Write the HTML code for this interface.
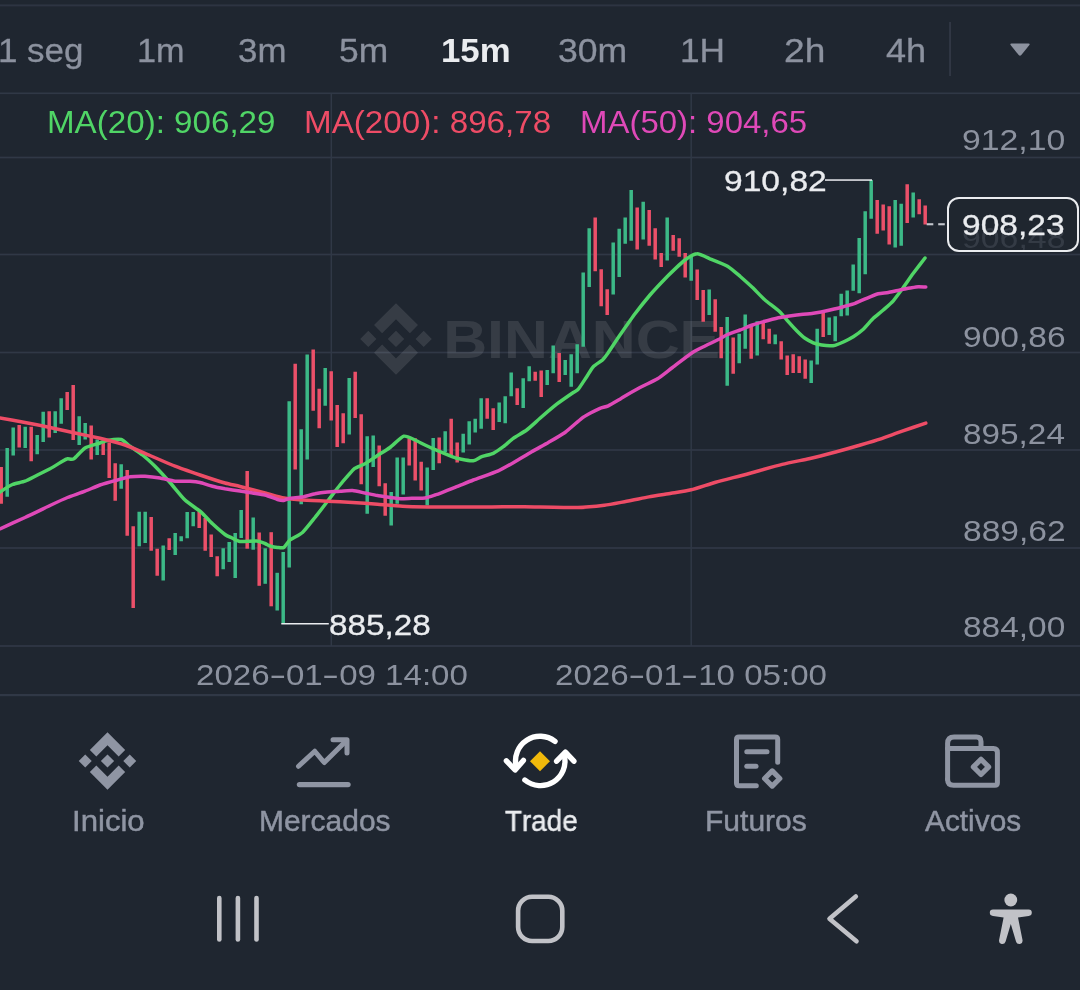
<!DOCTYPE html>
<html lang="es"><head><meta charset="utf-8"><title>Binance chart</title>
<style>
html,body{margin:0;padding:0;background:#1f2630;}
body{width:1080px;height:990px;position:relative;overflow:hidden;font-family:"Liberation Sans",sans-serif;}
.abs{position:absolute;}
.grp{position:absolute;left:0;top:0;width:0;height:0;}
.t{position:absolute;white-space:nowrap;line-height:1;font-kerning:none;transform-origin:0 0;will-change:transform;}
</style></head><body>
<svg class="abs" style="left:0;top:0" width="1080" height="990" viewBox="0 0 1080 990">
<rect x="0" y="4.4" width="1080" height="2" fill="#2d3442"/>
<rect x="0" y="92.5" width="1080" height="1.6" fill="#303846"/>
<rect x="949.3" y="22" width="1.5" height="54" fill="#363c4a"/>
<path d="M1011.5 43.5 H1028.5 Q1030.5 43.5 1029.2 45.3 L1021.3 55 Q1020 56.5 1018.7 55 L1010.8 45.3 Q1009.5 43.5 1011.5 43.5Z" fill="#8c929f"/>
<rect x="0" y="156.65" width="1080" height="1.7" fill="#303846"/>
<rect x="0" y="253.65" width="1080" height="1.7" fill="#303846"/>
<rect x="0" y="351.65" width="1080" height="1.7" fill="#303846"/>
<rect x="0" y="449.15" width="1080" height="1.7" fill="#303846"/>
<rect x="0" y="547.15" width="1080" height="1.7" fill="#303846"/>
<rect x="0" y="645.15" width="1080" height="1.7" fill="#303846"/>
<rect x="0" y="694" width="1080" height="2.2" fill="#303846"/>
<rect x="330.55" y="93" width="1.5" height="553" fill="#303846"/>
<rect x="690.45" y="93" width="1.5" height="553" fill="#303846"/>
<path transform="translate(360.25 303.15) scale(0.56473)" d="M38.73 53.2 63.3 28.63l24.58 24.58 14.3-14.3L63.3 0 24.43 38.9l14.3 14.3z M0 63.31l14.3-14.3 14.3 14.3-14.3 14.3z M38.73 73.41 63.3 97.98l24.58-24.58 14.31 14.29-38.89 38.91-38.88-38.88-.02-.02 14.33-14.29z M98 63.31l14.3-14.3 14.31 14.3-14.31 14.3z M77.83 63.3 63.3 48.78 52.57 59.51l-1.24 1.23-2.54 2.54-.02.02.02.03 14.51 14.5 14.53-14.52.01-.01-.01-.01z" fill="#ffffff" fill-opacity="0.105"/>
<text x="443.2" y="358" font-family="Liberation Sans, sans-serif" font-weight="700" font-size="54" fill="#ffffff" fill-opacity="0.105" textLength="277" lengthAdjust="spacingAndGlyphs">BINANCE</text>
<rect x="-0.55" y="467.00" width="3.5" height="36.75" fill="#eb5069"/>
<rect x="5.45" y="448.00" width="3.5" height="48.75" fill="#3cb987"/>
<rect x="11.45" y="427.50" width="3.5" height="28.00" fill="#3cb987"/>
<rect x="17.45" y="425.00" width="3.5" height="22.50" fill="#eb5069"/>
<rect x="23.45" y="426.75" width="3.5" height="21.25" fill="#3cb987"/>
<rect x="29.45" y="426.75" width="3.5" height="34.50" fill="#eb5069"/>
<rect x="35.45" y="435.00" width="3.5" height="19.25" fill="#3cb987"/>
<rect x="41.45" y="411.75" width="3.5" height="30.25" fill="#3cb987"/>
<rect x="47.45" y="411.25" width="3.5" height="26.25" fill="#eb5069"/>
<rect x="53.45" y="411.25" width="3.5" height="21.75" fill="#3cb987"/>
<rect x="59.45" y="398.25" width="3.5" height="25.50" fill="#3cb987"/>
<rect x="65.45" y="392.00" width="3.5" height="18.00" fill="#eb5069"/>
<rect x="71.45" y="385.00" width="3.5" height="55.00" fill="#eb5069"/>
<rect x="77.45" y="416.25" width="3.5" height="28.75" fill="#3cb987"/>
<rect x="83.45" y="423.00" width="3.5" height="16.50" fill="#3cb987"/>
<rect x="89.45" y="425.50" width="3.5" height="34.00" fill="#eb5069"/>
<rect x="95.45" y="439.50" width="3.5" height="15.50" fill="#3cb987"/>
<rect x="101.45" y="440.50" width="3.5" height="14.50" fill="#eb5069"/>
<rect x="107.45" y="442.50" width="3.5" height="35.50" fill="#eb5069"/>
<rect x="113.45" y="463.25" width="3.5" height="37.50" fill="#eb5069"/>
<rect x="119.45" y="464.25" width="3.5" height="24.50" fill="#3cb987"/>
<rect x="125.45" y="470.00" width="3.5" height="65.75" fill="#eb5069"/>
<rect x="131.45" y="526.25" width="3.5" height="81.75" fill="#eb5069"/>
<rect x="137.45" y="511.75" width="3.5" height="34.50" fill="#3cb987"/>
<rect x="143.45" y="511.75" width="3.5" height="31.25" fill="#3cb987"/>
<rect x="149.45" y="517.00" width="3.5" height="33.75" fill="#eb5069"/>
<rect x="155.45" y="548.75" width="3.5" height="27.00" fill="#eb5069"/>
<rect x="161.45" y="545.50" width="3.5" height="35.00" fill="#3cb987"/>
<rect x="167.45" y="538.25" width="3.5" height="11.75" fill="#eb5069"/>
<rect x="173.45" y="533.00" width="3.5" height="22.00" fill="#3cb987"/>
<rect x="179.45" y="536.25" width="3.5" height="5.00" fill="#3cb987"/>
<rect x="185.45" y="512.00" width="3.5" height="26.25" fill="#3cb987"/>
<rect x="191.45" y="512.00" width="3.5" height="14.25" fill="#3cb987"/>
<rect x="197.45" y="511.25" width="3.5" height="16.75" fill="#eb5069"/>
<rect x="203.45" y="518.00" width="3.5" height="32.75" fill="#eb5069"/>
<rect x="209.45" y="534.50" width="3.5" height="22.50" fill="#eb5069"/>
<rect x="215.45" y="556.25" width="3.5" height="20.00" fill="#eb5069"/>
<rect x="221.45" y="548.25" width="3.5" height="21.00" fill="#3cb987"/>
<rect x="227.45" y="542.00" width="3.5" height="20.00" fill="#3cb987"/>
<rect x="233.45" y="533.00" width="3.5" height="45.00" fill="#3cb987"/>
<rect x="239.45" y="510.00" width="3.5" height="28.00" fill="#3cb987"/>
<rect x="245.45" y="471.00" width="3.5" height="77.70" fill="#eb5069"/>
<rect x="251.45" y="517.50" width="3.5" height="32.20" fill="#3cb987"/>
<rect x="257.45" y="532.50" width="3.5" height="53.30" fill="#eb5069"/>
<rect x="263.45" y="548.30" width="3.5" height="35.50" fill="#3cb987"/>
<rect x="269.45" y="532.20" width="3.5" height="74.10" fill="#eb5069"/>
<rect x="275.45" y="572.80" width="3.5" height="37.70" fill="#3cb987"/>
<rect x="281.45" y="552.00" width="3.5" height="71.70" fill="#3cb987"/>
<rect x="287.45" y="401.25" width="3.5" height="166.25" fill="#3cb987"/>
<rect x="293.45" y="363.75" width="3.5" height="105.75" fill="#eb5069"/>
<rect x="299.45" y="429.25" width="3.5" height="75.00" fill="#3cb987"/>
<rect x="305.45" y="354.50" width="3.5" height="105.00" fill="#3cb987"/>
<rect x="311.45" y="349.50" width="3.5" height="61.25" fill="#eb5069"/>
<rect x="317.45" y="388.75" width="3.5" height="39.50" fill="#eb5069"/>
<rect x="323.45" y="368.00" width="3.5" height="37.75" fill="#3cb987"/>
<rect x="329.45" y="371.25" width="3.5" height="49.25" fill="#eb5069"/>
<rect x="335.45" y="405.00" width="3.5" height="42.00" fill="#eb5069"/>
<rect x="341.45" y="413.25" width="3.5" height="30.00" fill="#eb5069"/>
<rect x="347.45" y="378.00" width="3.5" height="56.50" fill="#3cb987"/>
<rect x="353.45" y="371.75" width="3.5" height="46.25" fill="#eb5069"/>
<rect x="359.45" y="414.25" width="3.5" height="70.00" fill="#eb5069"/>
<rect x="365.45" y="436.25" width="3.5" height="77.50" fill="#3cb987"/>
<rect x="371.45" y="435.50" width="3.5" height="31.50" fill="#3cb987"/>
<rect x="377.45" y="445.50" width="3.5" height="40.75" fill="#eb5069"/>
<rect x="383.45" y="483.25" width="3.5" height="32.50" fill="#eb5069"/>
<rect x="389.45" y="492.00" width="3.5" height="33.50" fill="#3cb987"/>
<rect x="395.45" y="457.50" width="3.5" height="46.25" fill="#3cb987"/>
<rect x="401.45" y="457.50" width="3.5" height="37.00" fill="#3cb987"/>
<rect x="407.45" y="438.25" width="3.5" height="27.25" fill="#eb5069"/>
<rect x="413.45" y="438.25" width="3.5" height="42.25" fill="#eb5069"/>
<rect x="419.45" y="461.75" width="3.5" height="28.75" fill="#eb5069"/>
<rect x="425.45" y="467.50" width="3.5" height="38.00" fill="#3cb987"/>
<rect x="431.45" y="438.00" width="3.5" height="32.00" fill="#3cb987"/>
<rect x="437.45" y="437.50" width="3.5" height="25.75" fill="#eb5069"/>
<rect x="443.45" y="431.25" width="3.5" height="20.75" fill="#3cb987"/>
<rect x="449.45" y="418.75" width="3.5" height="36.25" fill="#eb5069"/>
<rect x="455.45" y="442.50" width="3.5" height="20.00" fill="#eb5069"/>
<rect x="461.45" y="433.75" width="3.5" height="18.75" fill="#3cb987"/>
<rect x="467.45" y="421.25" width="3.5" height="23.25" fill="#3cb987"/>
<rect x="473.45" y="418.75" width="3.5" height="13.75" fill="#3cb987"/>
<rect x="479.45" y="398.25" width="3.5" height="30.50" fill="#3cb987"/>
<rect x="485.45" y="398.25" width="3.5" height="20.50" fill="#eb5069"/>
<rect x="491.45" y="408.25" width="3.5" height="21.75" fill="#eb5069"/>
<rect x="497.45" y="402.50" width="3.5" height="19.50" fill="#3cb987"/>
<rect x="503.45" y="396.25" width="3.5" height="27.00" fill="#3cb987"/>
<rect x="509.45" y="372.50" width="3.5" height="23.75" fill="#3cb987"/>
<rect x="515.45" y="388.25" width="3.5" height="16.75" fill="#eb5069"/>
<rect x="521.45" y="378.25" width="3.5" height="29.75" fill="#3cb987"/>
<rect x="527.45" y="366.25" width="3.5" height="15.00" fill="#3cb987"/>
<rect x="533.45" y="371.75" width="3.5" height="9.00" fill="#eb5069"/>
<rect x="539.45" y="370.50" width="3.5" height="26.50" fill="#eb5069"/>
<rect x="545.45" y="370.00" width="3.5" height="15.00" fill="#3cb987"/>
<rect x="551.45" y="345.50" width="3.5" height="27.75" fill="#3cb987"/>
<rect x="557.45" y="353.00" width="3.5" height="29.00" fill="#eb5069"/>
<rect x="563.45" y="360.00" width="3.5" height="15.00" fill="#3cb987"/>
<rect x="569.45" y="354.25" width="3.5" height="32.50" fill="#3cb987"/>
<rect x="575.45" y="344.25" width="3.5" height="29.00" fill="#3cb987"/>
<rect x="581.45" y="272.50" width="3.5" height="74.25" fill="#3cb987"/>
<rect x="587.45" y="228.25" width="3.5" height="58.75" fill="#3cb987"/>
<rect x="593.45" y="217.50" width="3.5" height="53.75" fill="#eb5069"/>
<rect x="599.45" y="269.25" width="3.5" height="37.00" fill="#eb5069"/>
<rect x="605.45" y="289.25" width="3.5" height="25.75" fill="#eb5069"/>
<rect x="611.45" y="242.50" width="3.5" height="52.00" fill="#3cb987"/>
<rect x="617.45" y="228.75" width="3.5" height="48.25" fill="#3cb987"/>
<rect x="623.45" y="217.50" width="3.5" height="26.25" fill="#3cb987"/>
<rect x="629.45" y="190.00" width="3.5" height="50.75" fill="#3cb987"/>
<rect x="635.45" y="207.50" width="3.5" height="42.00" fill="#eb5069"/>
<rect x="641.45" y="201.75" width="3.5" height="37.75" fill="#3cb987"/>
<rect x="647.45" y="210.00" width="3.5" height="35.75" fill="#eb5069"/>
<rect x="653.45" y="228.25" width="3.5" height="31.25" fill="#eb5069"/>
<rect x="659.45" y="253.00" width="3.5" height="14.00" fill="#eb5069"/>
<rect x="665.45" y="217.50" width="3.5" height="43.00" fill="#3cb987"/>
<rect x="671.45" y="235.00" width="3.5" height="15.75" fill="#eb5069"/>
<rect x="677.45" y="238.25" width="3.5" height="18.50" fill="#eb5069"/>
<rect x="683.45" y="253.00" width="3.5" height="24.50" fill="#eb5069"/>
<rect x="689.45" y="256.25" width="3.5" height="24.50" fill="#3cb987"/>
<rect x="695.45" y="269.50" width="3.5" height="30.50" fill="#eb5069"/>
<rect x="701.45" y="290.00" width="3.5" height="31.75" fill="#eb5069"/>
<rect x="707.45" y="289.50" width="3.5" height="25.50" fill="#3cb987"/>
<rect x="713.45" y="299.25" width="3.5" height="32.50" fill="#eb5069"/>
<rect x="719.45" y="327.00" width="3.5" height="31.25" fill="#eb5069"/>
<rect x="725.45" y="317.00" width="3.5" height="68.75" fill="#3cb987"/>
<rect x="731.45" y="337.50" width="3.5" height="36.25" fill="#eb5069"/>
<rect x="737.45" y="333.75" width="3.5" height="29.50" fill="#3cb987"/>
<rect x="743.45" y="314.50" width="3.5" height="34.25" fill="#3cb987"/>
<rect x="749.45" y="326.25" width="3.5" height="32.50" fill="#eb5069"/>
<rect x="755.45" y="321.25" width="3.5" height="34.25" fill="#3cb987"/>
<rect x="761.45" y="323.00" width="3.5" height="16.25" fill="#eb5069"/>
<rect x="767.45" y="328.75" width="3.5" height="15.00" fill="#eb5069"/>
<rect x="773.45" y="334.50" width="3.5" height="9.75" fill="#3cb987"/>
<rect x="779.45" y="341.25" width="3.5" height="18.25" fill="#eb5069"/>
<rect x="785.45" y="355.50" width="3.5" height="19.50" fill="#eb5069"/>
<rect x="791.45" y="354.25" width="3.5" height="18.75" fill="#eb5069"/>
<rect x="797.45" y="356.25" width="3.5" height="16.75" fill="#eb5069"/>
<rect x="803.45" y="359.50" width="3.5" height="19.25" fill="#eb5069"/>
<rect x="809.45" y="360.50" width="3.5" height="22.50" fill="#3cb987"/>
<rect x="815.45" y="328.75" width="3.5" height="35.75" fill="#3cb987"/>
<rect x="821.45" y="312.50" width="3.5" height="24.50" fill="#eb5069"/>
<rect x="827.45" y="317.50" width="3.5" height="17.50" fill="#3cb987"/>
<rect x="833.45" y="316.25" width="3.5" height="25.00" fill="#3cb987"/>
<rect x="839.45" y="293.75" width="3.5" height="22.50" fill="#3cb987"/>
<rect x="845.45" y="290.50" width="3.5" height="25.00" fill="#3cb987"/>
<rect x="851.45" y="264.50" width="3.5" height="26.25" fill="#3cb987"/>
<rect x="857.45" y="238.00" width="3.5" height="55.25" fill="#3cb987"/>
<rect x="863.45" y="211.25" width="3.5" height="63.00" fill="#3cb987"/>
<rect x="869.45" y="180.00" width="3.5" height="38.75" fill="#3cb987"/>
<rect x="875.45" y="200.00" width="3.5" height="33.75" fill="#eb5069"/>
<rect x="881.45" y="204.50" width="3.5" height="26.00" fill="#eb5069"/>
<rect x="887.45" y="206.25" width="3.5" height="38.25" fill="#eb5069"/>
<rect x="893.45" y="200.00" width="3.5" height="47.50" fill="#3cb987"/>
<rect x="899.45" y="203.75" width="3.5" height="42.00" fill="#3cb987"/>
<rect x="905.45" y="184.25" width="3.5" height="38.75" fill="#eb5069"/>
<rect x="911.45" y="192.50" width="3.5" height="25.00" fill="#3cb987"/>
<rect x="917.45" y="199.25" width="3.5" height="15.00" fill="#eb5069"/>
<rect x="923.45" y="205.50" width="3.5" height="19.00" fill="#eb5069"/>
<path d="M0.0 492.0 C1.2 491.2 10.0 485.6 12.5 484.5 C15.0 483.4 22.5 482.2 25.0 481.2 C27.5 480.3 35.0 476.2 37.5 475.0 C40.0 473.8 47.5 470.1 50.0 468.8 C52.5 467.4 60.8 462.2 62.5 461.2 C64.2 460.2 66.4 459.0 67.5 458.8 C68.6 458.5 72.0 459.8 73.8 458.8 C75.5 457.7 82.4 449.6 85.0 448.0 C87.6 446.4 97.8 443.8 100.0 443.0 C102.2 442.2 105.4 440.9 107.5 440.5 C109.6 440.1 119.0 438.9 121.2 439.5 C123.5 440.1 127.9 444.7 130.0 446.2 C132.1 447.8 140.0 453.0 142.5 455.0 C145.0 457.0 152.2 463.5 155.0 466.2 C157.8 469.0 167.0 479.1 170.0 482.5 C173.0 485.9 182.0 497.1 185.0 500.0 C188.0 502.9 197.2 508.9 200.0 511.2 C202.8 513.6 210.0 521.4 212.5 523.8 C215.0 526.1 223.1 533.1 225.0 534.5 C226.9 535.9 230.5 537.3 232.0 538.0 C233.5 538.7 237.5 541.2 240.0 541.5 C242.5 541.8 254.2 540.8 256.7 541.0 C259.2 541.2 263.7 543.0 265.0 543.5 C266.3 544.0 268.8 545.6 270.0 546.0 C271.2 546.4 276.1 547.4 277.5 547.5 C278.9 547.6 282.5 548.2 283.8 547.5 C285.0 546.8 288.1 541.5 290.0 540.0 C291.9 538.5 300.0 534.8 302.5 532.5 C305.0 530.2 312.5 520.6 315.0 517.5 C317.5 514.4 325.0 504.5 327.5 501.2 C330.0 498.0 338.0 487.5 340.0 485.0 C342.0 482.5 346.0 477.9 347.5 476.2 C349.0 474.6 353.2 469.5 355.0 468.2 C356.8 467.0 362.8 465.0 365.0 463.8 C367.2 462.5 375.0 457.1 377.5 455.5 C380.0 453.9 387.4 449.4 390.0 447.5 C392.6 445.6 401.2 437.0 403.8 436.2 C406.2 435.5 412.9 439.1 415.0 440.0 C417.1 440.9 422.5 443.8 425.0 445.0 C427.5 446.2 436.8 450.4 440.0 451.7 C443.2 453.0 453.4 457.4 456.7 458.3 C460.0 459.2 470.8 461.0 473.3 460.8 C475.8 460.6 479.7 457.4 481.7 456.7 C483.7 455.9 491.1 454.3 493.3 453.3 C495.5 452.3 501.3 448.2 503.3 446.7 C505.3 445.2 511.0 440.0 513.3 438.3 C515.6 436.6 524.0 432.0 526.7 430.0 C529.4 428.0 537.0 420.9 540.0 418.3 C543.0 415.7 553.4 406.8 556.7 404.2 C560.0 401.6 571.1 394.0 573.3 392.5 C575.5 391.0 577.0 390.8 578.3 389.2 C579.6 387.6 585.2 378.9 586.7 376.7 C588.2 374.4 591.7 368.4 593.3 366.7 C594.9 365.0 601.1 361.3 602.5 360.0 C603.9 358.7 605.8 356.2 607.5 353.8 C609.2 351.2 617.2 339.0 620.0 335.0 C622.8 331.0 632.0 317.8 635.0 313.8 C638.0 309.8 646.8 298.8 650.0 295.0 C653.2 291.2 664.0 279.8 667.5 276.2 C671.0 272.8 682.0 262.2 685.0 260.0 C688.0 257.8 694.5 253.9 697.0 253.8 C699.5 253.6 707.0 257.5 710.0 258.8 C713.0 260.0 724.5 264.5 727.5 266.2 C730.5 268.0 737.5 274.1 740.0 276.2 C742.5 278.4 750.0 285.1 752.5 287.5 C755.0 289.9 762.2 297.6 765.0 300.0 C767.8 302.4 777.7 309.8 780.0 312.0 C782.3 314.2 786.6 319.8 788.3 321.7 C790.0 323.6 795.0 329.1 796.7 330.8 C798.4 332.5 803.3 337.1 805.0 338.3 C806.7 339.5 811.6 342.1 813.3 342.8 C815.0 343.5 820.0 344.7 821.7 345.0 C823.4 345.3 828.7 345.8 830.0 345.8 C831.3 345.8 833.7 345.7 835.0 345.3 C836.3 344.9 841.5 342.9 843.3 342.0 C845.1 341.1 851.3 338.0 853.3 336.7 C855.3 335.4 861.3 331.0 863.3 329.2 C865.3 327.4 871.3 320.2 873.3 318.3 C875.3 316.4 881.3 311.8 883.3 310.0 C885.3 308.2 891.3 303.1 893.3 300.8 C895.3 298.6 901.3 290.2 903.3 287.5 C905.3 284.8 911.1 276.2 913.3 273.3 C915.5 270.4 923.8 259.5 925.0 258.0" fill="none" stroke="#50d566" stroke-width="3.5" stroke-linejoin="round" stroke-linecap="round"/>
<path d="M0.0 418.0 C2.5 418.4 20.0 421.6 25.0 422.5 C30.0 423.4 45.0 426.4 50.0 427.5 C55.0 428.6 70.0 431.9 75.0 433.0 C80.0 434.1 95.0 437.1 100.0 438.2 C105.0 439.4 120.0 443.3 125.0 445.0 C130.0 446.7 145.0 453.4 150.0 455.5 C155.0 457.6 170.0 464.3 175.0 466.2 C180.0 468.2 195.0 473.3 200.0 475.0 C205.0 476.7 221.0 481.9 225.0 483.0 C229.0 484.1 236.0 485.5 240.0 486.5 C244.0 487.5 260.6 491.9 265.0 493.0 C269.4 494.1 280.0 497.3 283.8 498.0 C287.5 498.7 298.1 499.7 302.5 500.0 C306.9 500.3 322.5 501.0 327.5 501.2 C332.5 501.5 347.5 502.2 352.5 502.5 C357.5 502.8 372.5 503.9 377.5 504.2 C382.5 504.6 397.5 506.0 402.5 506.2 C407.5 506.5 422.5 506.9 427.5 507.0 C432.5 507.1 446.2 507.0 452.5 507.0 C458.8 507.0 482.8 507.0 490.0 507.0 C497.2 507.0 515.6 506.6 524.4 506.7 C533.2 506.8 569.8 507.6 577.8 507.5 C585.8 507.4 599.5 505.9 604.4 505.3 C609.3 504.7 622.2 502.1 626.7 501.3 C631.2 500.5 644.5 497.7 648.9 496.9 C653.3 496.1 666.9 494.0 671.1 493.3 C675.3 492.6 686.6 490.9 691.1 489.8 C695.6 488.7 710.0 483.8 715.6 482.2 C721.2 480.6 740.0 476.0 746.7 474.2 C753.4 472.4 776.0 465.9 782.2 464.4 C788.4 462.8 803.6 459.9 808.9 458.7 C814.2 457.5 830.7 453.3 835.6 452.0 C840.5 450.7 853.4 447.1 857.8 445.8 C862.2 444.5 875.6 440.6 880.0 439.1 C884.4 437.6 897.6 432.7 902.2 431.1 C906.8 429.5 923.4 423.9 925.8 423.1" fill="none" stroke="#ee4c66" stroke-width="3.5" stroke-linejoin="round" stroke-linecap="round"/>
<path d="M0.0 528.8 C2.5 527.6 20.0 519.8 25.0 517.5 C30.0 515.2 45.8 507.5 50.0 505.5 C54.2 503.5 64.0 498.9 67.5 497.5 C71.0 496.1 81.8 492.5 85.0 491.2 C88.2 490.0 96.8 486.1 100.0 485.0 C103.2 483.9 114.5 480.8 117.5 480.0 C120.5 479.2 127.2 477.1 130.0 476.8 C132.8 476.4 142.0 476.1 145.0 476.2 C148.0 476.4 157.0 477.5 160.0 478.0 C163.0 478.5 172.0 480.9 175.0 481.2 C178.0 481.6 187.5 481.1 190.0 481.2 C192.5 481.4 197.8 482.0 200.0 482.5 C202.2 483.0 210.0 485.6 212.5 486.2 C215.0 486.9 222.2 488.3 225.0 488.8 C227.8 489.2 237.2 490.6 240.0 491.0 C242.8 491.4 250.0 492.6 252.5 493.0 C255.0 493.4 262.5 494.4 265.0 495.0 C267.5 495.6 275.6 498.9 277.5 499.5 C279.4 500.1 282.5 500.6 283.8 500.5 C285.0 500.4 288.1 498.6 290.0 498.2 C291.9 497.9 300.0 497.4 302.5 497.0 C305.0 496.6 312.5 494.2 315.0 493.8 C317.5 493.2 325.0 492.2 327.5 492.0 C330.0 491.8 337.5 491.4 340.0 491.2 C342.5 491.1 350.0 490.3 352.5 490.5 C355.0 490.7 362.5 492.5 365.0 493.0 C367.5 493.5 375.0 495.1 377.5 495.5 C380.0 495.9 387.5 497.2 390.0 497.5 C392.5 497.8 400.0 498.7 402.5 498.8 C405.0 498.8 412.8 498.3 415.0 498.2 C417.2 498.2 423.0 498.3 425.0 498.0 C427.0 497.7 433.5 495.5 435.0 495.0 C436.5 494.5 437.8 494.1 440.0 493.3 C442.2 492.5 453.4 488.0 456.7 486.7 C460.0 485.4 469.1 481.6 473.3 480.0 C477.5 478.4 494.1 472.6 498.3 470.8 C502.5 469.0 511.7 463.6 515.0 461.7 C518.3 459.8 528.4 453.6 531.7 451.7 C535.0 449.8 545.0 444.4 548.3 442.5 C551.6 440.6 561.7 434.9 565.0 432.5 C568.3 430.1 579.2 420.2 581.7 418.3 C584.2 416.4 588.2 414.3 590.0 413.3 C591.8 412.3 598.2 409.1 600.0 408.3 C601.8 407.6 606.3 406.7 608.3 405.8 C610.3 404.9 618.6 400.0 620.0 399.2 C621.4 398.4 620.5 398.7 622.5 397.5 C624.5 396.3 636.5 389.4 640.0 387.5 C643.5 385.6 654.2 380.8 657.5 378.8 C660.8 376.8 669.0 370.1 672.5 367.5 C676.0 364.9 689.2 354.6 692.5 352.5 C695.8 350.4 702.2 347.4 705.0 346.0 C707.8 344.6 717.8 339.9 720.0 338.8 C722.2 337.6 725.5 335.4 727.5 334.5 C729.5 333.6 737.5 330.9 740.0 330.0 C742.5 329.1 750.0 325.9 752.5 325.0 C755.0 324.1 762.2 322.0 765.0 321.2 C767.8 320.5 776.8 318.1 780.0 317.5 C783.2 316.9 793.4 315.4 796.7 315.0 C800.0 314.6 810.0 313.8 813.3 313.3 C816.6 312.8 827.0 310.7 830.0 310.0 C833.0 309.3 840.8 307.4 843.3 306.7 C845.8 306.0 852.7 304.1 855.0 303.3 C857.3 302.5 864.4 299.3 866.7 298.3 C869.0 297.3 876.1 294.3 878.3 293.7 C880.5 293.1 886.1 292.9 888.3 292.5 C890.5 292.1 897.8 290.4 900.0 290.0 C902.2 289.6 908.2 288.3 910.0 288.0 C911.8 287.7 916.7 286.8 918.3 286.7 C919.9 286.6 925.0 287.0 925.8 287.0" fill="none" stroke="#df49b8" stroke-width="3.5" stroke-linejoin="round" stroke-linecap="round"/>
<rect x="825" y="179.3" width="47" height="1.5" fill="#eaecef"/>
<rect x="281.3" y="623" width="47.5" height="1.5" fill="#eaecef"/>
<rect x="926.7" y="223.2" width="6.6" height="2.1" fill="#c3c6cd"/>
<rect x="938.2" y="223.2" width="6.6" height="2.1" fill="#c3c6cd"/>
<path transform="translate(78.75 732.25) scale(0.45415)" d="M38.73 53.2 63.3 28.63l24.58 24.58 14.3-14.3L63.3 0 24.43 38.9l14.3 14.3z M0 63.31l14.3-14.3 14.3 14.3-14.3 14.3z M38.73 73.41 63.3 97.98l24.58-24.58 14.31 14.29-38.89 38.91-38.88-38.88-.02-.02 14.33-14.29z M98 63.31l14.3-14.3 14.31 14.3-14.31 14.3z M77.83 63.3 63.3 48.78 52.57 59.51l-1.24 1.23-2.54 2.54-.02.02.02.03 14.51 14.5 14.53-14.52.01-.01-.01-.01z" fill="#8f95a3" fill-opacity="1"/>
<g fill="none" stroke="#8f95a3" stroke-width="5" stroke-linecap="round" stroke-linejoin="round"><polyline points="298.5,766.25 314.75,751.25 324.25,762.5 345.5,741.5"/><polyline points="333,739.7 347,739.7 347,753"/><line x1="299.5" y1="784.6" x2="348" y2="784.6" stroke-width="5.4"/></g>
<g fill="none" stroke="#ffffff" stroke-width="5.4" stroke-linecap="round" stroke-linejoin="round"><path d="M555.04 741.43 A24.5 24.5 0 0 0 516.2 766.5"/><polyline points="506.4,760.8 515.1,770 523.4,760.4"/><path d="M524.88 780.04 A24.5 24.5 0 0 0 564.3 755.5"/><polyline points="556.6,761.2 565.4,752.2 573.9,761.2"/></g>
<path d="M540 751.2 L550 761.2 L540 771.2 L530 761.2Z" fill="#f0b90b"/>
<g fill="none" stroke="#8f95a3" stroke-width="5" stroke-linecap="round" stroke-linejoin="round"><path d="M756.3 785.8 H739 Q736.5 785.8 736.5 783.3 V739.5 Q736.5 737 739 737 H775.2 Q777.7 737 777.7 739.5 V762.3"/><line x1="746.8" y1="751.8" x2="767" y2="751.8"/><line x1="746.8" y1="766.2" x2="756" y2="766.2"/><path d="M772.2 770.9 L779.8 778.5 L772.2 786.1 L764.6 778.5Z" stroke-width="5.2"/></g>
<g fill="none" stroke="#8f95a3" stroke-width="5" stroke-linecap="round" stroke-linejoin="round"><path d="M947.6 779.2 V743.4 Q947.6 736.9 954.1 736.9 H976.5 Q981 736.9 981 741.4 V748.4"/><path d="M947.6 748.4 H993.4 Q997.4 748.4 997.4 752.4 V782.7 Q997.4 785.2 994.9 785.2 H953.6 Q947.6 785.2 947.6 779.2"/><path d="M981 759.3 L988.6 766.9 L981 774.5 L973.4 766.9Z" stroke-width="5.2"/></g>
<g fill="#c1c2c7"><rect x="217" y="895.8" width="4.6" height="46" rx="2.3"/><rect x="235.6" y="895.8" width="4.6" height="46" rx="2.3"/><rect x="254.2" y="895.8" width="4.6" height="46" rx="2.3"/></g>
<rect x="518.1" y="896.8" width="44.2" height="44.2" rx="14" ry="14" fill="none" stroke="#c1c2c7" stroke-width="4.6"/>
<polyline points="855.8,896.5 829.5,918.8 856.5,941.3" fill="none" stroke="#c1c2c7" stroke-width="4.6" stroke-linecap="round" stroke-linejoin="round"/>
<g fill="#c1c2c7"><circle cx="1010.8" cy="900" r="6.4"/><path d="M993 909.5 H1028.7 Q1031.8 909.5 1031.8 912.6 Q1031.8 915.7 1028.7 916 L1018 917.5 L1022.5 940 Q1023 943.5 1020 944 Q1017 944.5 1016 941.5 L1010.8 924 L1005.6 941.5 Q1004.6 944.5 1001.6 944 Q998.6 943.5 999.1 940 L1003.6 917.5 L993 916 Q989.8 915.7 989.8 912.6 Q989.8 909.5 993 909.5Z"/></g>
</svg>
<nav class="grp timeframes">
<div class="t" style="left:-1.66px;top:33.22px;font-size:34px;color:#8c929f;letter-spacing:0.000px;transform:scaleX(1.0269);-webkit-text-stroke:0.3px currentColor;">1 seg</div>
<div class="t" style="left:136.64px;top:33.22px;font-size:34px;color:#8c929f;letter-spacing:0.000px;transform:scaleX(1.0082);-webkit-text-stroke:0.3px currentColor;">1m</div>
<div class="t" style="left:237.57px;top:33.22px;font-size:34px;color:#8c929f;letter-spacing:0.000px;transform:scaleX(1.0253);-webkit-text-stroke:0.3px currentColor;">3m</div>
<div class="t" style="left:339.08px;top:33.22px;font-size:34px;color:#8c929f;letter-spacing:0.000px;transform:scaleX(1.0406);-webkit-text-stroke:0.3px currentColor;">5m</div>
<div class="t" style="left:440.51px;top:33.22px;font-size:34px;color:#eaecef;letter-spacing:0.000px;transform:scaleX(1.0235);font-weight:700;">15m</div>
<div class="t" style="left:558.15px;top:33.22px;font-size:34px;color:#8c929f;letter-spacing:0.000px;transform:scaleX(1.0463);-webkit-text-stroke:0.3px currentColor;">30m</div>
<div class="t" style="left:680.32px;top:33.22px;font-size:34px;color:#8c929f;letter-spacing:0.000px;transform:scaleX(1.0367);-webkit-text-stroke:0.3px currentColor;">1H</div>
<div class="t" style="left:783.63px;top:33.22px;font-size:34px;color:#8c929f;letter-spacing:0.000px;transform:scaleX(1.0914);-webkit-text-stroke:0.3px currentColor;">2h</div>
<div class="t" style="left:886.17px;top:33.22px;font-size:34px;color:#8c929f;letter-spacing:0.000px;transform:scaleX(1.0623);-webkit-text-stroke:0.3px currentColor;">4h</div>
</nav><section class="grp ma-legend">
<div class="t" style="left:46.78px;top:107.46px;font-size:31px;color:#50d566;letter-spacing:0.000px;transform:scaleX(1.0694);">MA(20): 906,29</div>
<div class="t" style="left:304.28px;top:107.46px;font-size:31px;color:#ee4c66;letter-spacing:0.000px;transform:scaleX(1.0704);">MA(200): 896,78</div>
<div class="t" style="left:580.30px;top:107.46px;font-size:31px;color:#df49b8;letter-spacing:0.000px;transform:scaleX(1.0628);">MA(50): 904,65</div>
</section><section class="grp price-axis">
<div class="t" style="left:962.22px;top:125.41px;font-size:30px;color:#8c929f;letter-spacing:0.000px;transform:scaleX(1.1258);">912,10</div>
<div class="t" style="left:962.21px;top:222.91px;font-size:30px;color:#8c929f;letter-spacing:0.000px;transform:scaleX(1.1275);opacity:.45;">906,48</div>
<div class="t" style="left:962.53px;top:321.91px;font-size:30px;color:#8c929f;letter-spacing:0.000px;transform:scaleX(1.1176);">900,86</div>
<div class="t" style="left:962.65px;top:419.00px;font-size:30px;color:#8c929f;letter-spacing:0.000px;transform:scaleX(1.1108);">895,24</div>
<div class="t" style="left:962.64px;top:516.40px;font-size:30px;color:#8c929f;letter-spacing:0.000px;transform:scaleX(1.1187);">889,62</div>
<div class="t" style="left:962.65px;top:612.11px;font-size:30px;color:#8c929f;letter-spacing:0.000px;transform:scaleX(1.1144);">884,00</div>
</section><section class="grp chart-labels">
<div class="abs" style="left:946.7px;top:197.2px;width:132.5px;height:55.3px;box-sizing:border-box;border:2px solid #eaecef;border-radius:12px;background:rgba(31,38,48,0.55)"></div>
<div class="t" style="left:962.23px;top:210.41px;font-size:30px;color:#eaecef;letter-spacing:0.000px;transform:scaleX(1.1176);-webkit-text-stroke:0.3px currentColor;">908,23</div>
<div class="t" style="left:723.93px;top:165.85px;font-size:30px;color:#eaecef;letter-spacing:0.000px;transform:scaleX(1.1200);-webkit-text-stroke:0.3px currentColor;">910,82</div>
<div class="t" style="left:329.05px;top:610.21px;font-size:30px;color:#eaecef;letter-spacing:0.000px;transform:scaleX(1.1094);-webkit-text-stroke:0.3px currentColor;">885,28</div>
</section><section class="grp time-axis">
<div class="t" style="left:195.54px;top:659.73px;font-size:29.5px;color:#8c929f;letter-spacing:0.000px;transform:scaleX(1.1210);">2026<span style="display:inline-block;transform:scaleX(1.55);margin:0 2.4px">-</span>01<span style="display:inline-block;transform:scaleX(1.55);margin:0 2.4px">-</span>09 14:00</div>
<div class="t" style="left:555.34px;top:659.73px;font-size:29.5px;color:#8c929f;letter-spacing:0.000px;transform:scaleX(1.1214);">2026<span style="display:inline-block;transform:scaleX(1.55);margin:0 2.4px">-</span>01<span style="display:inline-block;transform:scaleX(1.55);margin:0 2.4px">-</span>10 05:00</div>
</section><nav class="grp tabbar">
<div class="t" style="left:71.63px;top:807.45px;font-size:29px;color:#8f95a3;letter-spacing:0.000px;transform:scaleX(1.0736);-webkit-text-stroke:0.45px currentColor;">Inicio</div>
<div class="t" style="left:258.54px;top:807.45px;font-size:29px;color:#8f95a3;letter-spacing:0.000px;transform:scaleX(1.0331);-webkit-text-stroke:0.45px currentColor;">Mercados</div>
<div class="t" style="left:505.13px;top:807.45px;font-size:29px;color:#eaecef;letter-spacing:-0.000px;transform:scaleX(0.9585);-webkit-text-stroke:0.45px currentColor;">Trade</div>
<div class="t" style="left:705.29px;top:807.45px;font-size:29px;color:#8f95a3;letter-spacing:0.000px;transform:scaleX(1.0354);-webkit-text-stroke:0.45px currentColor;">Futuros</div>
<div class="t" style="left:924.94px;top:807.45px;font-size:29px;color:#8f95a3;letter-spacing:0.000px;transform:scaleX(1.0285);-webkit-text-stroke:0.45px currentColor;">Activos</div>
</nav>
</body></html>
